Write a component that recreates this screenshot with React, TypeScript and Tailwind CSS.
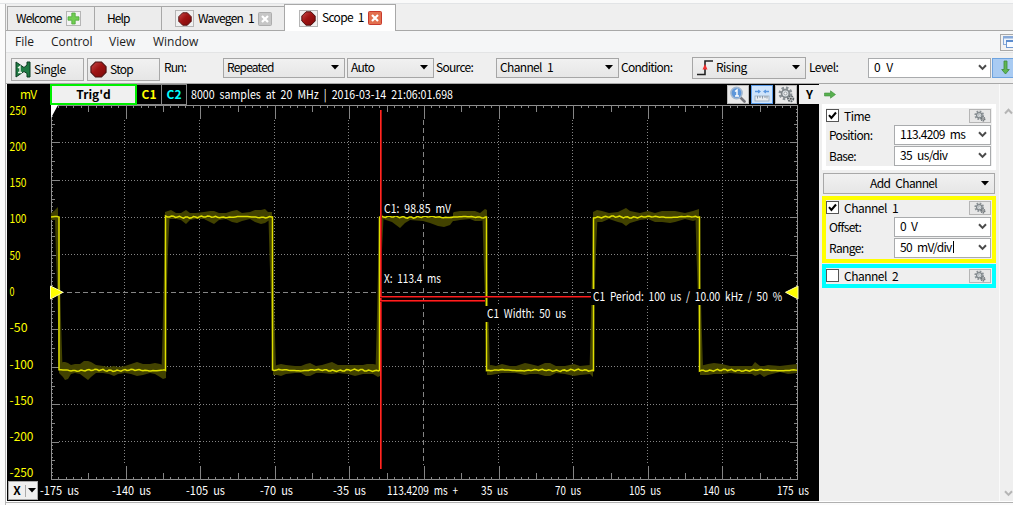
import React from 'react';

type Pt = [number, number, number];

const LOW1: Pt[] = [[59, 364, 373], [63, 362, 377], [65, 362, 380], [68, 363, 379], [71, 365, 374], [75, 364, 373], [80, 364, 374], [84, 361, 377], [88, 361, 380], [91, 362, 377], [96, 365, 373], [103, 366, 373], [109, 367, 374], [114, 366, 376], [118, 367, 374], [125, 366, 373], [131, 364, 374], [137, 362, 376], [143, 364, 375], [150, 364, 373], [155, 363, 374], [160, 364, 377], [163, 365, 379], [166, 366, 378]];
const HIGH0: Pt[] = [[51, 213, 220], [54, 211, 220], [57, 208, 220], [58, 207, 220]];
const HIGH1: Pt[] = [[165, 212, 219], [171, 210, 219], [176, 213, 219], [181, 213, 220], [186, 210, 224], [190, 213, 220], [196, 213, 219], [204, 212, 219], [210, 211, 222], [214, 211, 224], [219, 213, 220], [226, 213, 219], [232, 211, 222], [237, 210, 223], [242, 213, 221], [250, 212, 219], [255, 210, 222], [261, 210, 224], [265, 209, 223], [268, 212, 221], [272, 212, 219]];
const LOW2: Pt[] = [[273, 367, 375], [277, 365, 375], [281, 364, 376], [286, 365, 374], [295, 366, 373], [301, 366, 373], [306, 364, 376], [310, 363, 376], [316, 366, 373], [322, 365, 373], [332, 362, 374], [338, 365, 373], [348, 365, 374], [355, 365, 376], [363, 365, 374], [367, 364, 374], [373, 364, 374], [378, 365, 377], [380, 366, 376]];
const HIGH2: Pt[] = [[380, 210, 219], [383, 216, 219], [392, 217, 222], [396, 217, 225], [400, 217, 228], [405, 217, 223], [410, 217, 220], [423, 217, 221], [430, 217, 223], [438, 217, 226], [444, 217, 227], [450, 217, 225], [453, 213, 221], [454, 212, 221], [460, 211, 220], [470, 211, 219], [475, 211, 221], [480, 213, 221], [485, 209, 220], [487, 210, 219]];
const LOW3: Pt[] = [[487, 366, 375], [491, 365, 375], [496, 366, 374], [502, 364, 373], [510, 366, 373], [516, 366, 373], [525, 363, 375], [530, 364, 374], [538, 366, 374], [545, 363, 376], [550, 363, 376], [556, 366, 373], [565, 366, 374], [574, 364, 376], [580, 366, 375], [590, 365, 374], [593, 366, 377]];
const HIGH3: Pt[] = [[593, 212, 219], [597, 210, 222], [602, 211, 222], [609, 213, 219], [618, 212, 222], [622, 210, 223], [626, 208, 226], [630, 211, 223], [640, 213, 220], [648, 211, 219], [655, 213, 222], [662, 211, 222], [670, 211, 223], [675, 211, 222], [685, 213, 219], [693, 211, 221], [699, 209, 219]];
const LOW4: Pt[] = [[700, 366, 375], [708, 364, 375], [714, 363, 374], [722, 364, 374], [730, 366, 373], [742, 366, 374], [752, 366, 374], [755, 362, 376], [760, 366, 374], [764, 366, 377], [768, 365, 375], [780, 366, 372], [788, 365, 374], [797, 364, 373]];
const BANDS = [HIGH0, LOW1, HIGH1, LOW2, HIGH2, LOW3, HIGH3, LOW4];

const bandPath = (pts: Pt[]) =>
  pts.map(([x, u]) => `${x},${u}`).concat(pts.slice().reverse().map(([x, , l]) => `${x},${l}`)).join(' ');

const FALLS = [59, 272.5, 486.5, 699.5];
const RISES = [165.5, 379.5, 593.5];

const jitter = (x: number) => Math.sin(x * 0.9) * 0.4 + Math.sin(x * 0.17 + 1) * 0.5 + Math.sin(x * 2.3) * 0.4;

const buildTrace = () => {
  const edges = [51, 59, 165.5, 272.5, 379.5, 486.5, 593.5, 699.5, 797];
  const out: string[] = [];
  for (let i = 0; i < edges.length - 1; i++) {
    const level = i % 2 === 0 ? 217 : 370.3;
    for (let x = edges[i]; x < edges[i + 1]; x += 2) out.push(`${x},${(level + jitter(x)).toFixed(1)}`);
    out.push(`${edges[i + 1]},${level}`);
  }
  return out.join(' ');
};
const TRACE = buildTrace();

const VX = [124.5, 199.5, 274.5, 348.5, 423.5, 498.5, 572.5, 647.5, 722.5];
const HY = [142.5, 180.5, 217.5, 254.5, 292.5, 329.5, 366.5, 404.5, 441.5];

const Y_LABELS: [string, number, number][] = [
  ['250', 115, 17], ['200', 151, 17], ['150', 187, 17], ['100', 223, 17], ['50', 260, 11], ['0', 296, 5],
  ['-50', 332, 18], ['-100', 369, 24], ['-150', 405, 24], ['-200', 441, 24], ['-250', 477, 24],
];
const X_LABELS: [string, number, number][] = [
  ['-175 us', 40, 39], ['-140 us', 112, 39], ['-105 us', 186, 39], ['-70 us', 260, 33], ['-35 us', 333, 33],
  ['113.4209 ms +', 387, 71], ['35 us', 481, 27], ['70 us', 555, 26], ['105 us', 629, 32], ['140 us', 703, 32], ['175 us', 777, 32],
];

function Note({ x, y, w, children }: { x: number; y: number; w: number; children: string }) {
  return (
    <text x={x} y={y} textLength={w} lengthAdjust="spacingAndGlyphs" fill="#fff" fontSize="12">{children}</text>
  );
}

function Plot() {
  const ticks = Array.from({ length: 99 }, (_, i) => i + 1);
  return (
    <svg width="812" height="375" viewBox="7 105 812 375" className="block shrink-0 overflow-visible">
      <g fill="none" stroke="#858585" strokeWidth="1" shapeRendering="crispEdges">
        <path d="M51.5 479.5V105.5H797.5V479.5Z" stroke="#8f8f8f" />
        {VX.map((x) => (
          <path key={x} d={`M${x} 120V465`} strokeDasharray={x === 423.5 ? '5 3' : '1 2'} />
        ))}
        {HY.map((y) => (
          <path key={y} d={`M59 ${y}H790`} strokeDasharray={y === 292.5 ? '5 3' : '1 2'} />
        ))}
        {ticks.map((i) => {
          const x = Math.floor(51.5 + i * 7.46) + 0.5;
          const h = i % 10 === 0 ? 14 : i % 5 === 0 ? 7 : 3;
          return <path key={`x${i}`} d={`M${x} 105v${h}M${x} 480v${-h}`} />;
        })}
        {ticks.map((i) => {
          const y = Math.floor(105.5 + i * 3.74) + 0.5;
          const w = i % 10 === 0 ? 7 : i % 5 === 0 ? 3 : 1;
          return <path key={`y${i}`} d={`M52 ${y}h${w}M797 ${y}h${-w}`} />;
        })}
      </g>
      <g fill="#424200">
        {BANDS.map((b, i) => <polygon key={i} points={bandPath(b)} />)}
        {FALLS.map((x) => (
          <polygon key={x} points={`${x - 4},218 ${x - 3},255 ${x - 1.5},300 ${x},370 ${x + 3.5},368 ${x + 2},320 ${x + 1},280 ${x + 0.5},216`} />
        ))}
        {RISES.map((x) => (
          <polygon key={x} points={`${x - 4},370 ${x - 3},335 ${x - 1.5},270 ${x - 0.5},216 ${x + 4},218 ${x + 2.5},250 ${x + 1},300 ${x + 0.5},372`} />
        ))}
      </g>
      <polyline points={TRACE} fill="none" stroke="#dede00" strokeWidth="1.5" />
      <path d="M51 105H58L51 118Z" fill="#fff" />
      <path d="M50.5 286L63 292.3L50.5 299Z" fill="#ffff00" stroke="#ffffb0" strokeWidth="1" />
      <path d="M798 286L785.5 292.3L798 299Z" fill="#ffff00" stroke="#ffffb0" strokeWidth="1" />
      <g shapeRendering="crispEdges">
        <rect x="384" y="201" width="69" height="15" fill="#000" />
        <rect x="384" y="272" width="60" height="15" fill="#000" />
        <rect x="485" y="306" width="83" height="16" fill="#000" />
        <rect x="591" y="289" width="193" height="16" fill="#000" />
        <rect x="380" y="110" width="1" height="359" fill="#ff2a22" />
        <rect x="381" y="110" width="1" height="359" fill="#b01010" />
        <rect x="380" y="296" width="211" height="1" fill="#ff2020" />
        <rect x="380" y="297" width="211" height="1" fill="#800808" />
        <rect x="380" y="300" width="105" height="1" fill="#ff2020" />
        <rect x="380" y="301" width="105" height="1" fill="#a00808" />
      </g>
      <Note x={384} y={213} w={67}>C1: 98.85 mV</Note>
      <Note x={384} y={283} w={57}>X: 113.4 ms</Note>
      <Note x={487} y={318} w={79}>C1 Width: 50 us</Note>
      <Note x={593} y={301} w={189}>C1 Period: 100 us / 10.00 kHz / 50 %</Note>
      {Y_LABELS.map(([t, y, w]) => (
        <text key={t} x="9.5" y={y} textLength={w} lengthAdjust="spacingAndGlyphs" fill="#ffff00" fontSize="12">{t}</text>
      ))}
    </svg>
  );
}

function Gear({ size }: { size: number }) {
  return (
    <svg width={size} height={size} viewBox="0 0 16 16">
      <circle cx="7" cy="7" r="5" fill="none" stroke="#8a9196" strokeWidth="3" strokeDasharray="2.2 1.7" />
      <circle cx="7" cy="7" r="3.6" fill="#dfe4e7" stroke="#80878b" strokeWidth="1.6" />
      <circle cx="7" cy="7" r="1.4" fill="#f7f7f7" stroke="#858c90" strokeWidth=".7" />
      <circle cx="12" cy="12" r="2.5" fill="#cfd3d5" stroke="#60676b" strokeWidth="1.6" strokeDasharray="1.6 .8" />
      <circle cx="12" cy="12" r="1" fill="#555" />
    </svg>
  );
}

function RedDot({ size }: { size: number }) {
  return (
    <svg width={size} height={size} viewBox="0 0 18 18" className="shrink-0">
      <defs>
        <linearGradient id="red" x1="0" y1="0" x2="1" y2="1">
          <stop offset="0" stopColor="#c94c4c" />
          <stop offset=".45" stopColor="#a01414" />
          <stop offset="1" stopColor="#7c0808" />
        </linearGradient>
      </defs>
      <path d="M6 1H12L17 6V12L12 17H6L1 12V6Z" fill="url(#red)" stroke="#4d1010" strokeWidth="1.2" strokeLinejoin="round" />
    </svg>
  );
}

function Triangle() {
  return <svg width="8" height="5" viewBox="0 0 8 5" className="shrink-0"><path d="M0 0H8L4 4.6Z" fill="#000" /></svg>;
}

function Chevron({ color = '#4a4a4a', up = false }: { color?: string; up?: boolean }) {
  return (
    <svg width="9" height="7" viewBox="0 0 9 7" className="shrink-0">
      <path d={up ? 'M1 5.5L4.5 1.8L8 5.5' : 'M1 1.2L4.5 4.9L8 1.2'} fill="none" stroke={color} strokeWidth="2" />
    </svg>
  );
}

function Select({ className, icon, children }: { className: string; icon?: React.ReactNode; children: React.ReactNode }) {
  return (
    <div className={`flex shrink-0 items-center border border-[#a6a6a6] bg-linear-to-b from-[#f1f1f1] to-[#e6e6e6] pr-[5px] pl-[3px] ${className}`}>
      {icon}
      <span className="-mt-0.5 flex-1">{children}</span>
      <Triangle />
    </div>
  );
}

function Combo({ className, children }: { className: string; children: React.ReactNode }) {
  return (
    <div className={`flex shrink-0 items-center justify-between border border-[#a9abad] bg-white pr-[3px] pl-[5px] ${className}`}>
      <span className="-mt-0.5 flex items-center">{children}</span>
      <Chevron />
    </div>
  );
}

function CloseIcon({ red = false }: { red?: boolean }) {
  return (
    <svg width="14" height="14" viewBox="0 0 14 14" className="shrink-0">
      <rect x=".5" y=".5" width="13" height="13" rx="1" fill={red ? '#e2704f' : '#c6c6c6'} stroke={red ? '#c83a2e' : '#adadad'} />
      <path d="M4 4L10 10M10 4L4 10" stroke="#fff" strokeWidth="2.2" />
    </svg>
  );
}

function Check({ on = false }: { on?: boolean }) {
  return (
    <span className="-mt-0.5 flex h-[13px] w-[13px] shrink-0 items-center justify-center border border-[#555] bg-white">
      {on && <svg width="11" height="11" viewBox="0 0 11 11"><path d="M2 5.2L4.4 8L9 2.5" fill="none" stroke="#000" strokeWidth="2" /></svg>}
    </span>
  );
}

function GroupHeader({ on, title }: { on?: boolean; title: string }) {
  return (
    <div className="flex h-[17px] items-center">
      <Check on={on} />
      <span className="-mt-[2px] ml-[5px] tracking-[-0.5px]">{title}</span>
      <span className="mr-px -mt-0.5 ml-auto flex h-[14px] w-[22px] items-center justify-center border border-[#b5b5b5] bg-[#e7e7e7]"><Gear size={12} /></span>
    </div>
  );
}

function Field({ label, children }: { label: string; children: React.ReactNode }) {
  return (
    <div className="flex h-[21px] items-center">
      <span className="-mt-[2px] w-[68px] pl-[3px] tracking-[-0.65px]">{label}</span>
      <Combo className="-mt-0.5 h-5 w-[97px] tracking-[-0.65px]">{children}</Combo>
    </div>
  );
}

function ToolButton({ active = false, children }: { active?: boolean; children: React.ReactNode }) {
  return (
    <span className={`flex h-[19px] w-[22px] items-center justify-center border ${active ? 'border-[#5a9be8] bg-[#cfe4fb]' : 'border-[#bbb] bg-[#eaeaea]'}`}>
      {children}
    </span>
  );
}

export default function App() {
  return (
    <div className="flex h-[505px] w-[1013px] flex-col overflow-hidden bg-[#fbfbfb] font-['Noto_Sans_CJK_JP','Liberation_Sans',sans-serif] text-[12px] leading-[14px] font-normal whitespace-pre text-black [word-spacing:3px]">
      <div className="h-1 shrink-0 border-b border-[#e2e4e6] bg-[#fafafa]" />
      <div className="ml-[5px] flex min-h-0 flex-1 flex-col border-l border-[#b4b4b4]">
        <div className="flex h-[27px] shrink-0 items-end bg-[#efefef] pl-px shadow-[inset_0_-1px_0_#a8a8a8]">
          <div className="flex h-[25px] w-[88px] shrink-0 items-center border border-[#a8a8a8] bg-[#ececec] pl-[8px]">
            <span className="-mt-0.5 w-[46px] tracking-[-0.85px]">Welcome</span>
            <span className="ml-[4px] flex h-[15px] w-[15px] items-center justify-center border border-[#b5b5b5] bg-[#f3f3f3]">
              <svg width="13" height="13" viewBox="0 0 13 13" className="shrink-0"><path d="M4.8 1h3.4v3.8H12v3.4H8.2V12H4.8V8.2H1V4.8h3.8Z" fill="#72ce52" stroke="#4fa83d" strokeWidth=".8" /></svg>
            </span>
          </div>
          <div className="flex h-[25px] w-[67px] shrink-0 items-center border border-l-0 border-[#a8a8a8] bg-[#ececec] pl-[12px] tracking-[-0.9px]"><span className="-mt-0.5">Help</span></div>
          <div className="flex h-[25px] w-[122px] shrink-0 items-center border border-x-0 border-[#a8a8a8] bg-[#ececec] pl-[13px]">
            <span className="flex h-[17px] w-[19px] shrink-0 items-center justify-center border border-[#b5b5b5] bg-[#f0f0f0]"><RedDot size={14} /></span>
            <span className="-mt-0.5 w-[60px] shrink-0 pl-[4px] tracking-[-0.75px]">Wavegen 1</span>
            <span className="ml-[4px] w-[14px]"><CloseIcon /></span>
          </div>
          <div className="flex h-[27px] w-[112px] shrink-0 items-center border border-b-0 border-[#a8a8a8] bg-white pl-[14px]">
            <span className="flex h-[17px] w-[19px] shrink-0 items-center justify-center border border-[#b5b5b5] bg-[#f0f0f0]"><RedDot size={15} /></span>
            <span className="-mt-0.5 w-[50px] shrink-0 pl-[4px] tracking-[-0.7px]">Scope 1</span>
            <CloseIcon red />
          </div>
        </div>

        <div className="flex h-[22px] shrink-0 items-center border-b border-[#e3e4e5] bg-[#f5f6f7] pt-px pl-[9px] font-['Open_Sans',sans-serif] text-[12px] text-[#1c1c1c]">
          <span className="w-9">File</span>
          <span className="w-[58px]">Control</span>
          <span className="w-[44px]">View</span>
          <span>Window</span>
          <span className="ml-auto flex h-[17px] w-[13px] items-center overflow-hidden border border-r-0 border-[#a8a8a8] bg-[#f2f2f2] pl-[2px]">
            <svg width="14" height="14" viewBox="0 0 14 14" className="shrink-0">
              <rect x=".5" y="1.5" width="11" height="8" fill="#edf4fc" stroke="#87a9d8" /><path d="M0 2.5H12" stroke="#87a9d8" strokeWidth="2" />
              <rect x="3.5" y="5.5" width="12" height="7" fill="#f8fbff" stroke="#6f99d2" /><path d="M3 6H16" stroke="#5b8bcd" strokeWidth="2" />
            </svg>
          </span>
        </div>

        <div className="flex h-[31px] shrink-0 items-center border-b border-[#a8a8a8] bg-[#efefef] pl-[5px]">
          <div className="mt-0.5 flex h-[23px] w-[73px] shrink-0 items-center border border-[#a8a8a8] bg-linear-to-b from-[#f1f1f1] to-[#e6e6e6] pl-[3px]">
            <svg width="16" height="17" viewBox="0 0 16 17">
              <path d="M1 1L9 6.5L12 4V1H15V16H12V12.5L9 10.5L1 16Z" fill="#1f7a43" stroke="#0c3d22" strokeWidth="1" />
              <path d="M3 7L5 5.5V11.5M3 11.5H7" fill="none" stroke="#e8f5e8" strokeWidth="1.4" />
            </svg>
            <span className="-mt-px ml-[3px] tracking-[-0.5px]">Single</span>
          </div>
          <div className="mt-0.5 ml-[3px] flex h-[23px] w-[73px] shrink-0 items-center border border-[#a8a8a8] bg-linear-to-b from-[#f1f1f1] to-[#e6e6e6] pl-[2px]">
            <RedDot size={17} />
            <span className="-mt-px ml-[3px] tracking-[-0.7px]">Stop</span>
          </div>
          <span className="mb-[3px] w-[63px] shrink-0 pl-1 tracking-[-0.9px]">Run:</span>
          <Select className="mb-px h-5 w-[122px] tracking-[-0.8px]">Repeated</Select>
          <Select className="mb-px ml-[2px] h-5 w-[87px] tracking-[-0.7px]">Auto</Select>
          <span className="mb-[3px] w-[62px] shrink-0 pl-[2px] tracking-[-0.7px]">Source:</span>
          <Select className="mb-px h-5 w-[123px] tracking-[-0.65px]">Channel 1</Select>
          <span className="mb-[3px] w-[73px] shrink-0 pl-[2px] tracking-[-0.75px]">Condition:</span>
          <Select
            className="mb-px h-[22px] w-[114px] tracking-[-0.55px]"
            icon={
              <svg width="17" height="17" viewBox="0 0 17 17" className="mr-[3px] shrink-0">
                <path d="M1 15.5H9V2H17" fill="none" stroke="#222" strokeWidth="1.6" />
                <path d="M9 5L11.5 10.5H6.5Z" fill="#f03030" />
              </svg>
            }
          >
            Rising
          </Select>
          <span className="mb-[3px] w-[62px] shrink-0 pl-[3px] tracking-[-0.55px]">Level:</span>
          <Combo className="mb-px h-5 w-[123px]">0 V</Combo>
          <span className="mb-px ml-px flex h-5 w-[24px] shrink-0 items-center border border-[#6ea3df] bg-[#a9cbf2] pl-[8px]">
            <svg width="9" height="15" viewBox="0 0 9 15"><path d="M3 1H6V9.5H8.3L4.5 14L.7 9.5H3Z" fill="#5fb653" stroke="#3c8a3c" strokeWidth=".8" /></svg>
          </span>
        </div>

        <div className="flex h-[417px] shrink-0 pl-px">
          <div className="flex w-[812px] shrink-0 flex-col bg-black">
            <div className="flex h-[21px] shrink-0 items-center">
              <span className="-mt-0.5 w-[43px] pl-[13px] tracking-[-0.8px] text-[#ffff00]">mV</span>
              <span className="flex h-[21px] w-[87px] items-center justify-center border-2 border-[#00f000] bg-[#f0f0f0] font-bold"><span className="-mt-0.5">Trig'd</span></span>
              <span className="flex h-[21px] w-[25px] items-center justify-center border border-l-0 border-[#888] font-bold text-[#ffff00]"><span className="-mt-0.5">C1</span></span>
              <span className="flex h-[21px] w-[25px] items-center justify-center border border-l-0 border-[#888] font-bold text-[#00ffff]"><span className="-mt-0.5">C2</span></span>
              <svg width="270" height="20" viewBox="0 0 270 20" className="overflow-visible">
                <text x="4" y="14" textLength="262" lengthAdjust="spacingAndGlyphs" fill="#fff" fontSize="12">8000 samples at 20 MHz | 2016-03-14 21:06:01.698</text>
              </svg>
              <span className="ml-auto flex items-center gap-[2px]">
                <ToolButton>
                  <svg width="18" height="17" viewBox="0 0 18 17">
                    <path d="M11 11L15.5 15.5" stroke="#77777d" strokeWidth="2.6" strokeLinecap="round" />
                    <circle cx="7.5" cy="7" r="5.6" fill="#5d97da" stroke="#a2b8d1" strokeWidth="1.6" />
                    <path d="M6 5.5L8 4V10M6 10H10" fill="none" stroke="#fff" strokeWidth="1.4" />
                  </svg>
                </ToolButton>
                <ToolButton active>
                  <svg width="18" height="17" viewBox="0 0 18 17">
                    <path d="M2 5.5H7M11 5.5H16" stroke="#5c98e0" strokeWidth="1.4" />
                    <path d="M5 3.5L8 5.5L5 7.5ZM13 3.5L10 5.5L13 7.5Z" fill="#5c98e0" />
                    <rect x="2" y="10" width="14" height="5" fill="#e9edf1" stroke="#96a8bb" strokeWidth=".8" />
                    <path d="M4.5 10V12.5M7 10V12M9.5 10V12.5M12 10V12M14 10V12.5" stroke="#8090a0" strokeWidth=".9" />
                  </svg>
                </ToolButton>
                <ToolButton><Gear size={17} /></ToolButton>
                <span className="flex h-[19px] w-[20px] items-center bg-[#efefef] pl-[7px] font-bold"><span className="-mt-0.5">Y</span></span>
              </span>
            </div>
            <Plot />
            <div className="flex h-[21px] items-center pl-px">
              <div className="flex h-[19px] w-[30px] items-center border border-[#aaa] bg-[#efefef]">
                <span className="w-[17px] border-r border-[#aaa] text-center font-bold"><span className="-mt-0.5 block">X</span></span>
                <span className="flex flex-1 justify-center"><Triangle /></span>
              </div>
              <svg width="781" height="21" viewBox="38 480 781 21" className="overflow-visible">
                {X_LABELS.map(([t, x, w]) => (
                  <text key={t} x={x} y="495" textLength={w} lengthAdjust="spacingAndGlyphs" fill="#fff" fontSize="12">{t}</text>
                ))}
              </svg>
            </div>
          </div>

          <div className="flex min-w-0 flex-1 bg-[#efefef]">
            <div className="flex w-[181px] shrink-0 flex-col border-r border-[#fafafa] pl-[3px]">
              <div className="flex h-5 items-center pl-[2px]">
                <svg width="12" height="9" viewBox="0 0 12 9"><path d="M.5 3H6.5V.8L11.5 4.5L6.5 8.2V6H.5Z" fill="#58b04f" stroke="#3f913d" strokeWidth=".6" /></svg>
              </div>
              <div className="h-[66px] w-[174px] border-4 border-white bg-[#efefef]">
                <GroupHeader on title="Time" />
                <Field label="Position:">113.4209 ms</Field>
                <Field label="Base:">35 us/div</Field>
              </div>
              <div className="mt-[3px] ml-px flex h-[21px] w-[172px] items-center border border-[#a8a8a8] bg-linear-to-b from-[#f1f1f1] to-[#e6e6e6] pr-[5px]">
                <span className="-mt-0.5 flex-1 pl-[46px] tracking-[-0.65px]">Add Channel</span>
                <Triangle />
              </div>
              <div className="mt-[2px] h-[67px] w-[174px] border-4 border-[#ffff00] bg-[#efefef]">
                <GroupHeader on title="Channel 1" />
                <Field label="Offset:">0 V</Field>
                <Field label="Range:">50 mV/div<span className="ml-px h-3 w-px bg-black" /></Field>
              </div>
              <div className="mt-px h-6 w-[174px] border-4 border-[#00ffff] bg-[#efefef]">
                <GroupHeader title="Channel 2" />
              </div>
            </div>
            <div className="flex flex-1 flex-col items-end justify-between overflow-hidden pt-6 pb-1">
              <Chevron up color="#b5b5b5" />
              <Chevron color="#b5b5b5" />
            </div>
          </div>
        </div>
        <div className="h-[2px] shrink-0 border-b border-[#b0b0b0] bg-white" />
      </div>
    </div>
  );
}
